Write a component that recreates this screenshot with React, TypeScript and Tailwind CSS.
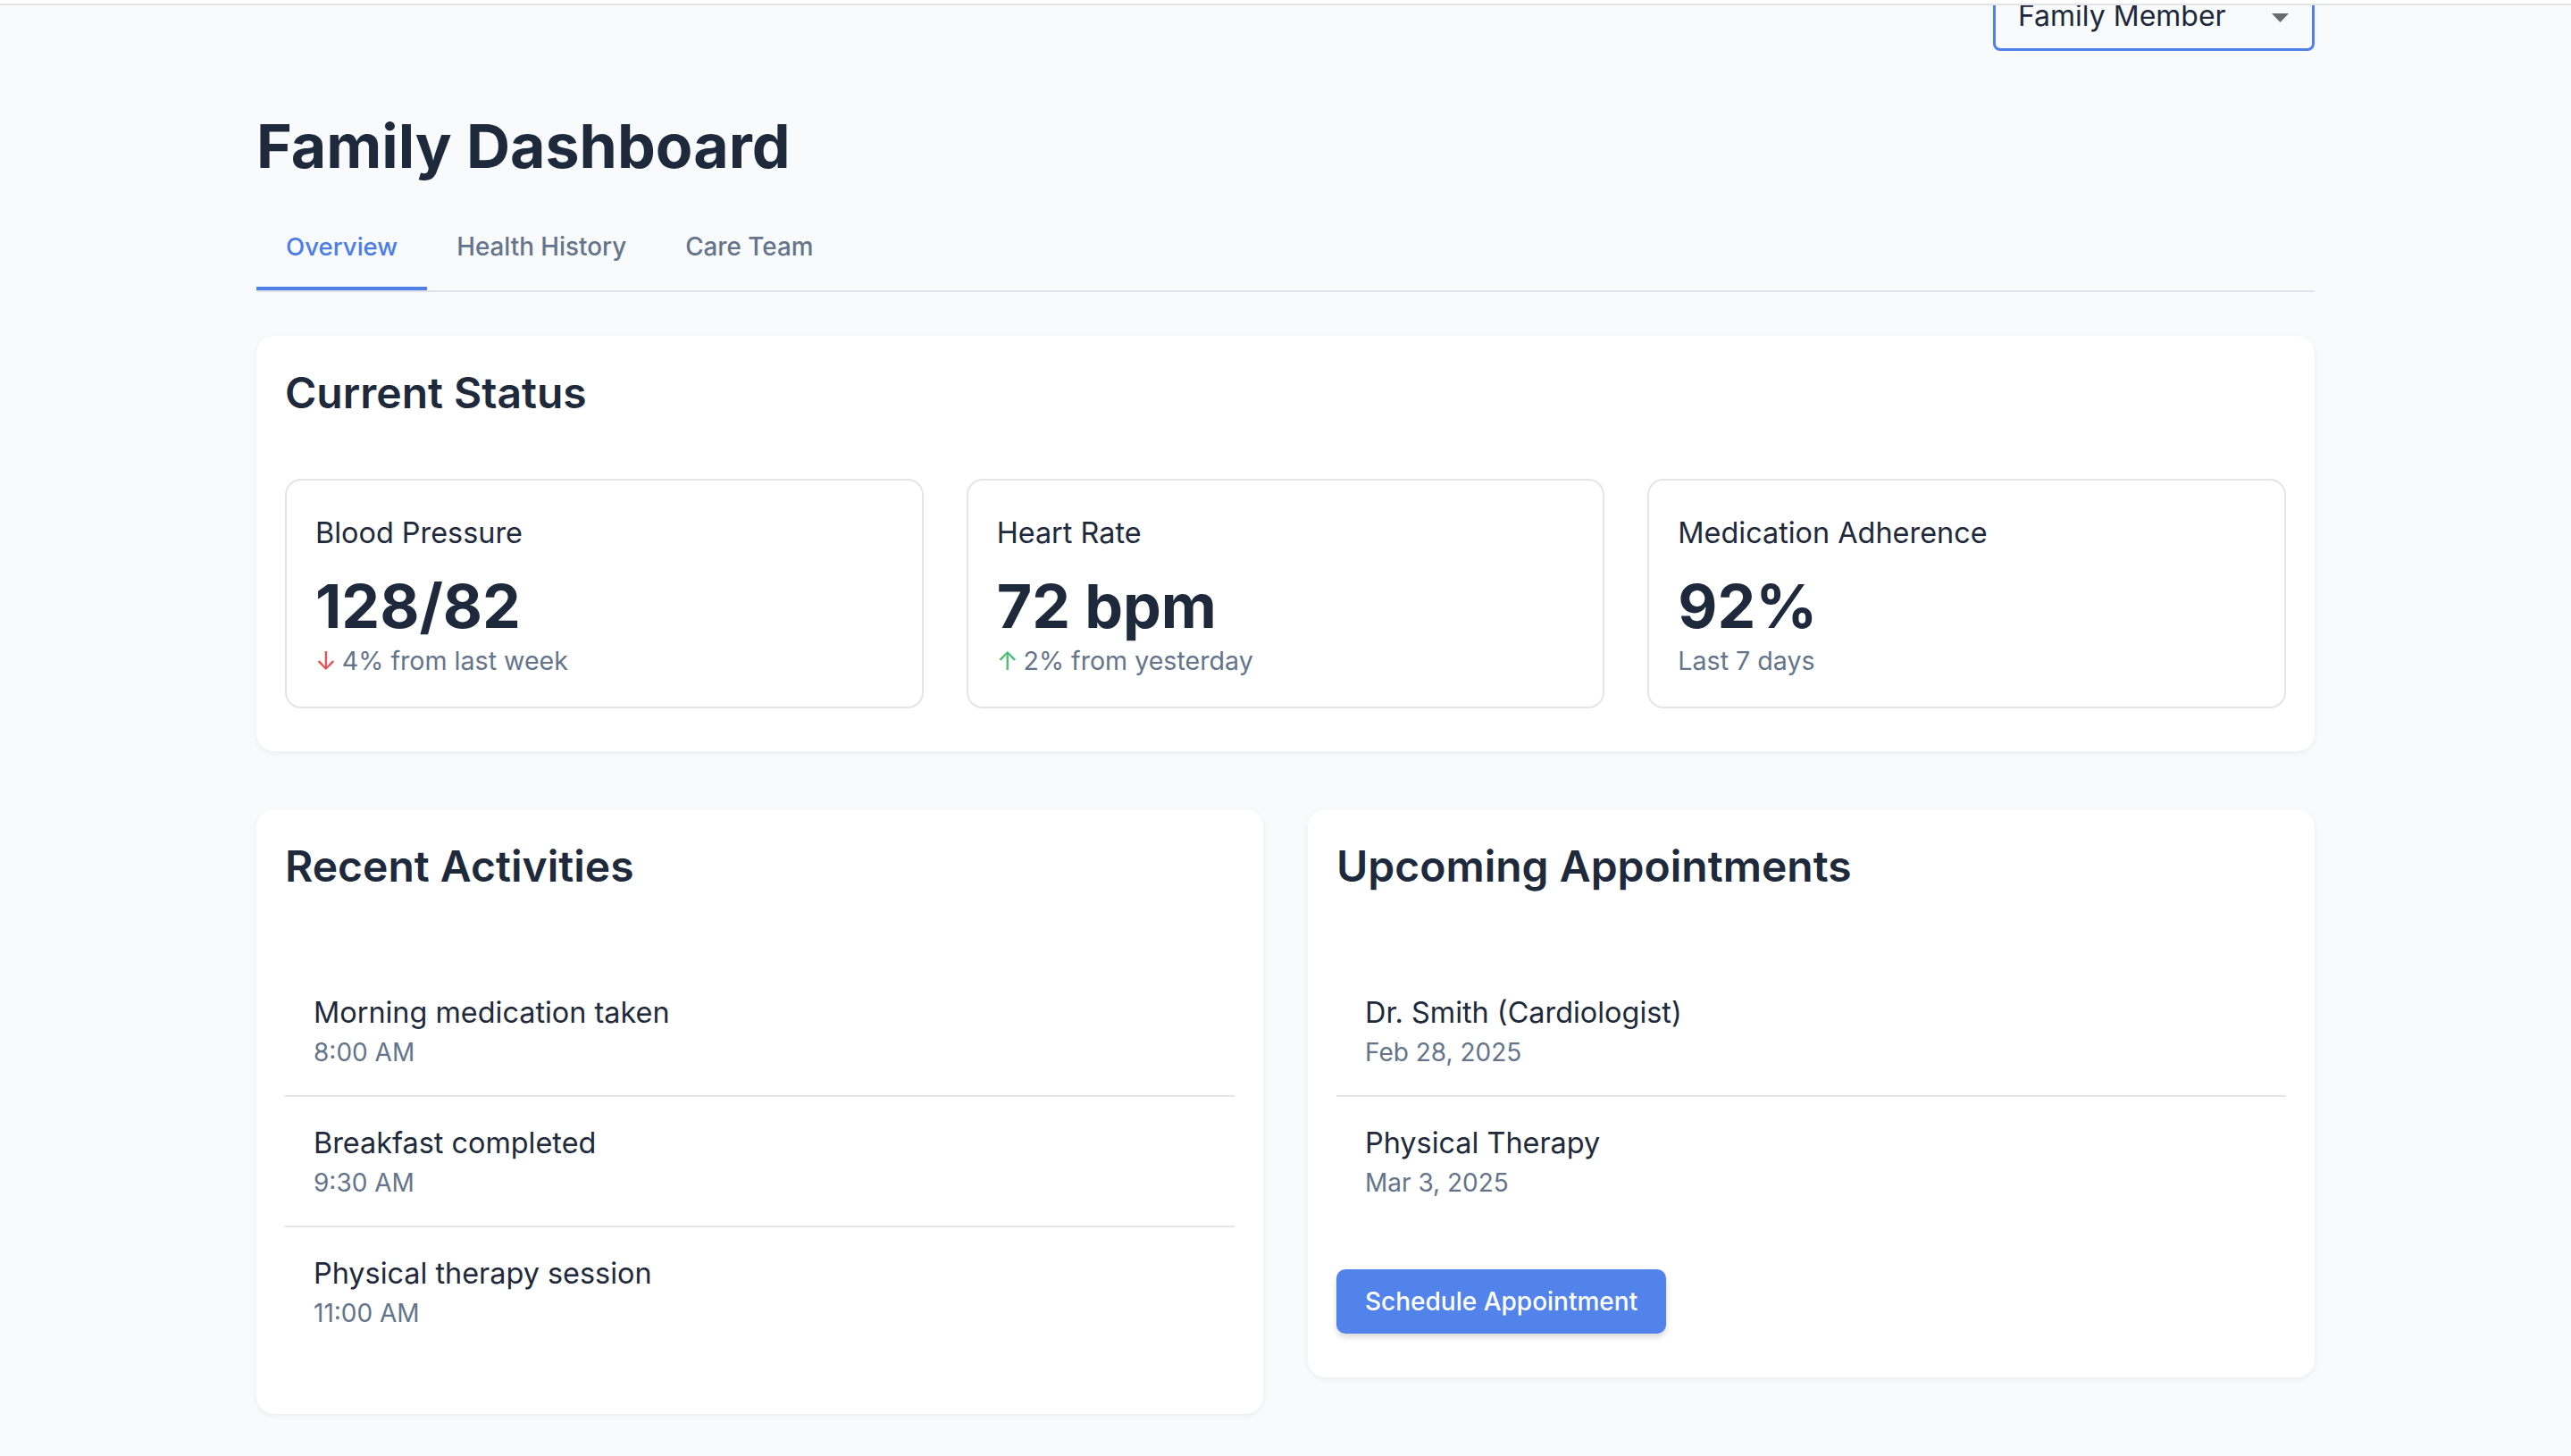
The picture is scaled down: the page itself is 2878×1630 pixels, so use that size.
import React from "react";

const stats = [
  { label: "Blood Pressure", value: "128/82", arrow: "down", sub: "4% from last week" },
  { label: "Heart Rate", value: "72 bpm", arrow: "up", sub: "2% from yesterday" },
  { label: "Medication Adherence", value: "92%", arrow: null, sub: "Last 7 days" },
];

const activities = [
  { title: "Morning medication taken", time: "8:00 AM" },
  { title: "Breakfast completed", time: "9:30 AM" },
  { title: "Physical therapy session", time: "11:00 AM" },
];

const appointments = [
  { title: "Dr. Smith (Cardiologist)", time: "Feb 28, 2025" },
  { title: "Physical Therapy", time: "Mar 3, 2025" },
];

function ListItem({ title, time, last }: { title: string; time: string; last: boolean }) {
  return (
    <div className={last ? "px-[32px] py-[28px]" : "px-[32px] py-[28px] border-b-2 border-[#e2e5ea]"}>
      <div className="text-[32.4px] leading-[48px] text-[#1e293b]">{title}</div>
      <div className="text-[28px] leading-[40px] text-[#64748b]">{time}</div>
    </div>
  );
}

export default function App() {
  return (
    <div className="min-h-screen bg-[#f8fafc] font-['Inter',sans-serif] pb-[40px]">
      <div className="h-[6px] bg-white border-b-2 border-[#e2e4e8]" />
      <div className="mx-auto w-[2304px]">
        <div className="flex justify-end">
          <div className="h-[51px] overflow-hidden">
            <div className="mt-[-27px] h-[78px] w-[360px] border-[3px] border-[#4f80ea] rounded-[8px] flex items-center justify-between pl-[25px] pr-[26px]">
              <span className="text-[32px] leading-[40px] text-[#1e293b]">Family Member</span>
              <svg width="19" height="10" viewBox="0 0 19 10" className="mt-[4px]">
                <polygon points="0,0 19,0 9.5,10" fill="#6b6b6b" />
              </svg>
            </div>
          </div>
        </div>

        <h1 className="mt-[66px] text-[68px] leading-[80px] font-bold text-[#1e293b]">Family Dashboard</h1>

        <div className="mt-[26px] flex border-b-2 border-[#dfe2e6]">
          <div className="px-[33px] pt-[27px] pb-[25px] border-b-4 border-[#4f80ea] text-[27.6px] leading-[40px] font-medium text-[#4a7ee6]">
            Overview
          </div>
          <div className="px-[33px] pt-[27px] pb-[29px] text-[27.8px] leading-[40px] font-medium text-[#64748b]">
            Health History
          </div>
          <div className="px-[33px] pt-[27px] pb-[29px] text-[27.8px] leading-[40px] font-medium text-[#64748b]">
            Care Team
          </div>
        </div>

        <div className="mt-[49px] bg-white rounded-[20px] shadow-[0_2px_6px_rgba(15,23,42,0.06)] px-[32px] pt-[32px] pb-[48px]">
          <h2 className="text-[48px] leading-[64px] font-semibold text-[#1e293b]">Current Status</h2>
          <div className="mt-[64px] grid grid-cols-3 gap-[48px]">
            {stats.map((s) => (
              <div key={s.label} className="border-2 border-[#e3e5e8] rounded-[18px] px-[32px] pt-[35px] pb-[31px]">
                <div className="text-[32.4px] leading-[48px] text-[#1e293b]">{s.label}</div>
                <div className="mt-[17px] text-[68px] leading-[80px] font-bold text-[#1e293b]">{s.value}</div>
                <div className="mt-[2px] text-[28.6px] leading-[40px] text-[#64748b] flex items-center">
                  {s.arrow === "down" && <span className="text-[#e05252] mr-[6px]">↓</span>}
                  {s.arrow === "up" && <span className="text-[#4cba7a] mr-[6px]">↑</span>}
                  <span>{s.sub}</span>
                </div>
              </div>
            ))}
          </div>
        </div>

        <div className="mt-[65px] grid grid-cols-2 gap-[50px] items-start">
          <div className="bg-white rounded-[20px] shadow-[0_2px_6px_rgba(15,23,42,0.06)] px-[32px] pt-[32px] pb-[65px]">
            <h2 className="text-[48px] leading-[64px] font-semibold text-[#1e293b]">Recent Activities</h2>
            <div className="mt-[80px]">
              {activities.map((a, i) => (
                <ListItem key={a.title} title={a.title} time={a.time} last={i === activities.length - 1} />
              ))}
            </div>
          </div>
          <div className="bg-white rounded-[20px] shadow-[0_2px_6px_rgba(15,23,42,0.06)] px-[32px] pt-[32px] pb-[49px]">
            <h2 className="text-[48px] leading-[64px] font-semibold text-[#1e293b]">Upcoming Appointments</h2>
            <div className="mt-[80px]">
              {appointments.map((a, i) => (
                <ListItem key={a.title} title={a.title} time={a.time} last={i === appointments.length - 1} />
              ))}
            </div>
            <button className="mt-[49px] h-[72px] px-[32px] rounded-[10px] bg-[#5283eb] text-white text-[28px] leading-[40px] font-medium shadow-[0_4px_6px_rgba(0,0,0,0.15)]">
              Schedule Appointment
            </button>
          </div>
        </div>
      </div>
    </div>
  );
}
